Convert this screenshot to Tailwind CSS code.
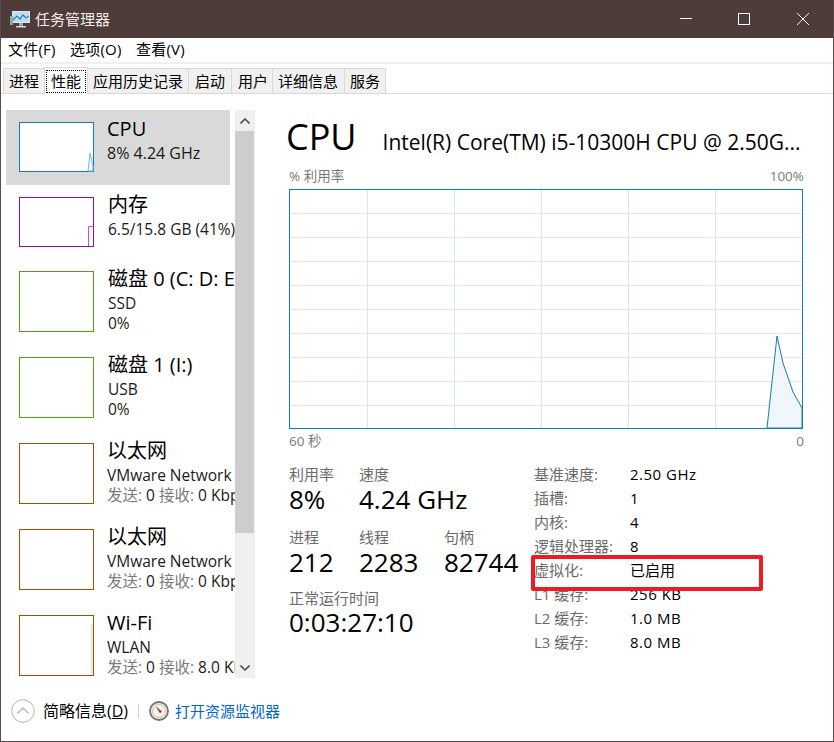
<!DOCTYPE html>
<html lang="zh-CN">
<head>
<meta charset="utf-8">
<title>任务管理器</title>
<script src="https://cdn.jsdelivr.net/npm/@tailwindcss/browser@4"></script>
</head>
<body class="bg-white">
<div class="relative w-[834px] h-[742px] overflow-hidden bg-white text-black border-l border-r border-b border-[#5c4a48] font-['Open_Sans','Noto_Sans_CJK_SC',sans-serif]">
  <!-- Title bar -->
  <div class="h-[38px] -mx-px bg-[#4e3c3a] flex items-center text-[#f0ecec]">
    <svg class="ml-[10px] w-[20px] h-[20px]" viewBox="0 0 20 20">
      <rect x="2.5" y="2.5" width="17" height="11" fill="#bcdcf2" stroke="#e8e8e8"/>
      <path d="M3 11l4-4 3 3 3-4 3 3 3-2" fill="none" stroke="#2f7fc0" stroke-width="1.2"/>
      <rect x="0" y="7" width="3" height="9" fill="#9aa59a"/>
      <rect x="1" y="8" width="1.5" height="2" fill="#7be04a"/>
      <rect x="9" y="14" width="4" height="3" fill="#9aa3a8"/>
      <rect x="6" y="17" width="10" height="1.5" fill="#d5dadd"/>
    </svg>
    <span class="ml-[5px] text-[15px] leading-none">任务管理器</span>
    <div class="ml-auto flex items-center h-full mr-[2px]">
      <svg class="w-[58px] h-[38px] -mr-px" viewBox="0 0 58 38"><path d="M21 18.5h12" stroke="#fff" stroke-width="1"/></svg>
      <svg class="w-[58px] h-[38px]" viewBox="0 0 58 38"><rect x="22.5" y="13.5" width="11" height="11" fill="none" stroke="#fff"/></svg>
      <svg class="w-[58px] h-[38px]" viewBox="0 0 58 38"><path d="M23 13l12 12M35 13L23 25" stroke="#fff" stroke-width="1"/></svg>
    </div>
  </div>
  <!-- Menu -->
  <div class="h-[23px] flex items-center pl-[7px] text-[15px] tracking-[0.2px] leading-none border-b-2 border-[#f0f0f0] box-content pb-[1px]">
    <span class="w-[62px]">文件(F)</span>
    <span class="w-[66px]">选项(O)</span>
    <span>查看(V)</span>
  </div>
  <!-- Tabs -->
  <div class="h-[28px] pl-[2px] pt-[2px] flex items-end text-[15px] leading-none border-b border-[#d9d9d9] box-content -mt-px">
    <span class="h-[25px] flex items-center px-[5px] bg-[#f0f0f0] border border-[#d9d9d9] border-b-0">进程</span>
    <span class="h-[27px] flex items-center mb-[-1px] bg-white border border-[#d9d9d9] border-b-0 px-[1px] -mx-px relative z-10"><span class="border border-dotted border-black px-[4px] h-[23px] flex items-center">性能</span></span>
    <span class="h-[25px] flex items-center px-[5px] bg-[#f0f0f0] border border-[#d9d9d9] border-b-0">应用历史记录</span>
    <span class="h-[25px] flex items-center px-[6px] bg-[#f0f0f0] border border-[#d9d9d9] border-b-0 -ml-px">启动</span>
    <span class="h-[25px] flex items-center pl-[6px] pr-[4px] bg-[#f0f0f0] border border-[#d9d9d9] border-b-0 -ml-px">用户</span>
    <span class="h-[25px] flex items-center pl-[5px] pr-[6px] bg-[#f0f0f0] border border-[#d9d9d9] border-b-0 -ml-px">详细信息</span>
    <span class="h-[25px] flex items-center px-[5px] bg-[#f0f0f0] border border-[#d9d9d9] border-b-0 -ml-px">服务</span>
  </div>
  <!-- Body -->
  <div class="flex h-[597px] pt-[16px]">
    <!-- Sidebar -->
    <div class="w-[255px] h-[568px] flex shrink-0">
      <div class="w-[234px] h-[568px] overflow-hidden pl-[5px] shrink-0">
        <!-- CPU -->
        <div class="w-[224px] h-[75px] bg-[#d9d9d9] flex pl-[13px] pt-[12px]">
          <svg class="w-[75px] h-[50px] shrink-0" viewBox="0 0 75 50"><rect x=".5" y=".5" width="74" height="49" fill="#fff" stroke="#117dbb"/><path d="M69 49L71 31 74 44V49Z" fill="#f1f6fa" stroke="#7fb5d8"/></svg>
          <div class="ml-[13px] whitespace-nowrap">
            <div class="text-[20px] leading-[22px] -mt-[4px]">CPU</div>
            <div class="text-[16px] leading-[20px] mt-[3px] text-[#1a1a1a]">8% 4.24 GHz</div>
          </div>
        </div>
        <!-- Memory -->
        <div class="w-[229px] h-[75px] flex pl-[13px] pt-[12px] overflow-hidden">
          <svg class="w-[75px] h-[50px] shrink-0" viewBox="0 0 75 50"><rect x=".5" y=".5" width="74" height="49" fill="#fff" stroke="#8b12ae"/><path d="M69.5 49V29.5H74" fill="#f4ecf7" stroke="#a662c4"/></svg>
          <div class="ml-[14px] whitespace-nowrap">
            <div class="text-[20px] leading-[22px] -mt-[3px]">内存</div>
            <div class="text-[15.5px] leading-[20px] mt-[3px] text-[#1a1a1a]">6.5/15.8 GB (41%)</div>
          </div>
        </div>
        <!-- Disk 0 -->
        <div class="w-[229px] h-[86px] flex pl-[13px] pt-[11px] overflow-hidden">
          <svg class="w-[75px] h-[61px] shrink-0" viewBox="0 0 75 61"><rect x=".5" y=".5" width="74" height="60" fill="#fff" stroke="#4da60c"/></svg>
          <div class="ml-[14px] whitespace-nowrap">
            <div class="text-[20px] leading-[22px] -mt-[3px]">磁盘 0 (C: D: E:)</div>
            <div class="text-[15.5px] leading-[20px] mt-[3px] text-[#1a1a1a]">SSD</div>
            <div class="text-[15.5px] leading-[20px] text-[#1a1a1a]">0%</div>
          </div>
        </div>
        <!-- Disk 1 -->
        <div class="w-[229px] h-[86px] flex pl-[13px] pt-[11px] overflow-hidden">
          <svg class="w-[75px] h-[61px] shrink-0" viewBox="0 0 75 61"><rect x=".5" y=".5" width="74" height="60" fill="#fff" stroke="#4da60c"/></svg>
          <div class="ml-[14px] whitespace-nowrap">
            <div class="text-[20px] leading-[22px] -mt-[3px]">磁盘 1 (I:)</div>
            <div class="text-[15.5px] leading-[20px] mt-[3px] text-[#1a1a1a]">USB</div>
            <div class="text-[15.5px] leading-[20px] text-[#1a1a1a]">0%</div>
          </div>
        </div>
        <!-- Ethernet -->
        <div class="w-[229px] h-[86px] flex pl-[13px] pt-[11px] overflow-hidden">
          <svg class="w-[75px] h-[61px] shrink-0" viewBox="0 0 75 61"><rect x=".5" y=".5" width="74" height="60" fill="#fff" stroke="#a74f01"/></svg>
          <div class="ml-[13px] whitespace-nowrap">
            <div class="text-[20px] leading-[22px] -mt-[3px]">以太网</div>
            <div class="text-[15.5px] leading-[20px] mt-[3px] text-[#1a1a1a]">VMware Network Adapter</div>
            <div class="text-[15.5px] leading-[20px] text-[#1a1a1a]"><span class="text-[#7a7a7a]">发送:</span> 0 <span class="text-[#7a7a7a]">接收:</span> 0 Kbps</div>
          </div>
        </div>
        <div class="w-[229px] h-[86px] flex pl-[13px] pt-[11px] overflow-hidden">
          <svg class="w-[75px] h-[61px] shrink-0" viewBox="0 0 75 61"><rect x=".5" y=".5" width="74" height="60" fill="#fff" stroke="#a74f01"/></svg>
          <div class="ml-[13px] whitespace-nowrap">
            <div class="text-[20px] leading-[22px] -mt-[3px]">以太网</div>
            <div class="text-[15.5px] leading-[20px] mt-[3px] text-[#1a1a1a]">VMware Network Adapter</div>
            <div class="text-[15.5px] leading-[20px] text-[#1a1a1a]"><span class="text-[#7a7a7a]">发送:</span> 0 <span class="text-[#7a7a7a]">接收:</span> 0 Kbps</div>
          </div>
        </div>
        <div class="w-[229px] h-[86px] flex pl-[13px] pt-[11px] overflow-hidden">
          <svg class="w-[75px] h-[61px] shrink-0" viewBox="0 0 75 61"><rect x=".5" y=".5" width="74" height="60" fill="#fff" stroke="#a74f01"/><path d="M73 9V60" stroke="#e0a68a" stroke-dasharray="1 1"/></svg>
          <div class="ml-[13px] whitespace-nowrap">
            <div class="text-[20px] leading-[22px] -mt-[3px]">Wi-Fi</div>
            <div class="text-[15.5px] leading-[20px] mt-[3px] text-[#1a1a1a]">WLAN</div>
            <div class="text-[15.5px] leading-[20px] text-[#1a1a1a]"><span class="text-[#7a7a7a]">发送:</span> 0 <span class="text-[#7a7a7a]">接收:</span> 8.0 Kbps</div>
          </div>
        </div>
      </div>
      <!-- Scrollbar -->
      <div class="w-[20px] h-[568px] bg-[#f0f0f0] flex flex-col shrink-0">
        <div class="h-[21px] flex items-center justify-center"><svg class="w-[10px] h-[6px]" viewBox="0 0 10 6"><path d="M.5 5.5L5 1l4.5 4.5" fill="none" stroke="#505050" stroke-width="1.6"/></svg></div>
        <div class="h-[402px] w-[19px] bg-[#cdcdcd]"></div>
        <div class="flex-1"></div>
        <div class="h-[21px] flex items-center justify-center"><svg class="w-[10px] h-[6px]" viewBox="0 0 10 6"><path d="M.5.5L5 5l4.5-4.5" fill="none" stroke="#505050" stroke-width="1.6"/></svg></div>
      </div>
    </div>
    <!-- Main -->
    <div class="ml-[33px] w-[515px] shrink-0 relative">
      <div class="flex items-baseline h-[48px] pt-[3px] box-content whitespace-nowrap">
        <span class="text-[36px] leading-[48px] -ml-[3px]">CPU</span>
        <span class="ml-[26px] text-[21px] leading-none">Intel(R) Core(TM) i5-10300H CPU @ 2.50G...</span>
      </div>
      <div class="flex justify-between text-[13.5px] leading-[18px] text-[#7a7a7a] mt-[6px] h-[19px]"><span>% 利用率</span><span>100%</span></div>
      <svg class="block mt-[3px] w-[514px] h-[240px]" viewBox="0 0 514 240">
        <g stroke="#d9e6f0" stroke-width="1">
          <path d="M0 24.5H514M0 48.5H514M0 72.5H514M0 96.5H514M0 120.5H514M0 144.5H514M0 168.5H514M0 192.5H514M0 216.5H514"/>
          <path d="M78.5 0V240M165.5 0V240M252.5 0V240M339.5 0V240M426.5 0V240"/>
        </g>
        <path d="M478 239L488 147 494 174 504 203 513 219V239Z" fill="#f1f6fa" stroke="#117dbb" stroke-width="1"/>
        <rect x=".5" y=".5" width="513" height="239" fill="none" stroke="#117dbb"/>
      </svg>
      <div class="flex justify-between text-[13.5px] leading-[18px] text-[#7a7a7a] mt-[3px]"><span>60 秒</span><span>0</span></div>
      <div class="flex mt-[14px]">
        <!-- Left stats -->
        <div class="w-[245px] shrink-0">
          <div class="flex">
            <div class="w-[70px]">
              <div class="text-[15px] leading-[20px] text-[#6b6b6b]">利用率</div>
              <div class="text-[26px] leading-[32px] -mt-[1px]">8%</div>
            </div>
            <div>
              <div class="text-[15px] leading-[20px] text-[#6b6b6b]">速度</div>
              <div class="text-[26px] leading-[32px] -mt-[1px]">4.24 GHz</div>
            </div>
          </div>
          <div class="flex mt-[12px]">
            <div class="w-[70px]">
              <div class="text-[15px] leading-[20px] text-[#6b6b6b]">进程</div>
              <div class="text-[26px] leading-[32px] -mt-[1px]">212</div>
            </div>
            <div class="w-[85px]">
              <div class="text-[15px] leading-[20px] text-[#6b6b6b]">线程</div>
              <div class="text-[26px] leading-[32px] -mt-[1px]">2283</div>
            </div>
            <div>
              <div class="text-[15px] leading-[20px] text-[#6b6b6b]">句柄</div>
              <div class="text-[26px] leading-[32px] -mt-[1px]">82744</div>
            </div>
          </div>
          <div class="mt-[10px]">
            <div class="text-[15px] leading-[20px] text-[#6b6b6b]">正常运行时间</div>
            <div class="text-[26px] leading-[32px] -mt-[2px]">0:03:27:10</div>
          </div>
        </div>
        <!-- Right stats -->
        <div class="text-[15px] leading-[24px] grid grid-cols-[96px_auto] -mt-[2px] h-[192px] whitespace-nowrap">
          <span class="text-[#6b6b6b]">基准速度:</span><span class="tracking-[0.5px]">2.50 GHz</span>
          <span class="text-[#6b6b6b]">插槽:</span><span>1</span>
          <span class="text-[#6b6b6b]">内核:</span><span>4</span>
          <span class="text-[#6b6b6b]">逻辑处理器:</span><span>8</span>
          <span class="text-[#6b6b6b]">虚拟化:</span><span>已启用</span>
          <span class="text-[#6b6b6b]">L1 缓存:</span><span class="tracking-[0.5px]">256 KB</span>
          <span class="text-[#6b6b6b]">L2 缓存:</span><span class="tracking-[0.5px]">1.0 MB</span>
          <span class="text-[#6b6b6b]">L3 缓存:</span><span class="tracking-[0.5px]">8.0 MB</span>
        </div>
      </div>
    </div>
  </div>
  <!-- Footer -->
  <div class="h-[40px] flex items-center pl-[10px] leading-none">
    <svg class="w-[24px] h-[24px]" viewBox="0 0 24 24"><circle cx="12" cy="12" r="11.3" fill="#fff" stroke="#b5b5b5"/><path d="M6.5 14.5L12 9l5.5 5.5" fill="none" stroke="#b5b5b5" stroke-width="1.4"/></svg>
    <span class="ml-[8px] text-[16px]">简略信息(<span class="underline">D</span>)</span>
    <span class="ml-[10px] w-px h-[14px] bg-[#d0d0d0]"></span>
    <svg class="ml-[10px] w-[20px] h-[20px]" viewBox="0 0 20 20"><circle cx="10" cy="10" r="9" fill="#ecebe6" stroke="#77736c" stroke-width="1.8"/><circle cx="10" cy="10" r="6.3" fill="#faf8f4" stroke="#c5bfb4"/><path d="M6.5 5l6.5 5.5-2 2z" fill="#c8322a"/></svg>
    <span class="ml-[6px] text-[15px] text-[#0066cc]">打开资源监视器</span>
  </div>
  <!-- Red annotation -->
  <div class="absolute left-[530px] top-[555px] w-[232px] h-[36px] border-[4px] border-[#ed1c24] rounded-[2px]"></div>
</div>
</body>
</html>
